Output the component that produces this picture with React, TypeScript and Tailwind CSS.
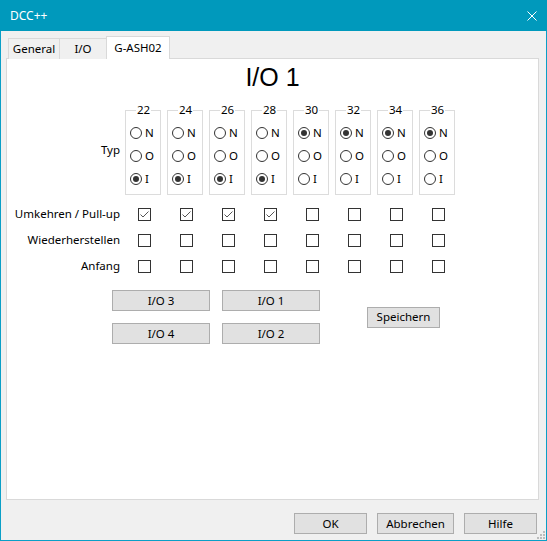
import React from "react";

const PINS = [22, 24, 26, 28, 30, 32, 34, 36];
// which radio is set per pin: "N" | "O" | "I"
const TYPE: Record<number, string> = {
  22: "I", 24: "I", 26: "I", 28: "I",
  30: "N", 32: "N", 34: "N", 36: "N",
};
const INVERT = [true, true, true, true, false, false, false, false];

function Radio({ on, label }: { on: boolean; label: string }) {
  return (
    <div className="flex h-[22px] items-center">
      <span className="flex h-[12px] w-[12px] items-center justify-center rounded-full border border-[#333333] bg-white">
        {on && <span className="h-[6px] w-[6px] rounded-full bg-[#333333]" />}
      </span>
      <span className="ml-[3px] leading-none">{label}</span>
    </div>
  );
}

function Check({ on }: { on: boolean }) {
  return (
    <span className="ml-[13px] flex h-[13px] w-[13px] items-center justify-center border border-[#333333] bg-white">
      {on && (
        <svg width="11" height="11" viewBox="0 0 11 11">
          <polyline
            points="1.5,5.5 4,8 9.5,2.5"
            fill="none"
            stroke="#555555"
            strokeWidth="1"
          />
        </svg>
      )}
    </span>
  );
}

function Btn({ w, children }: { w: string; children: React.ReactNode }) {
  return (
    <div
      className={`${w} flex h-[21px] items-center justify-center border border-[#adadad] bg-[#e1e1e1]`}
    >
      {children}
    </div>
  );
}

function CheckRow({ label, values }: { label: string; values: boolean[] }) {
  return (
    <div className="flex h-[26px] items-center">
      <div className="w-[113px] text-right">{label}</div>
      <div className="ml-[5px] flex gap-[6px]">
        {values.map((v, i) => (
          <div key={i} className="flex w-[36px] items-center">
            <Check on={v} />
          </div>
        ))}
      </div>
    </div>
  );
}

export default function App() {
  const none = PINS.map(() => false);

  return (
    <div
      className="relative flex h-[541px] w-[547px] flex-col border-x border-b border-[#0a9fc7] bg-[#f0f0f0] text-[11.5px] text-black"
      style={{ fontFamily: '"Noto Sans", "Open Sans", sans-serif' }}
    >
      {/* title bar */}
      <div className="-mx-px flex h-[31px] items-center justify-between bg-[#0099bc] pl-[10px] pr-[10px] text-[12px] text-white">
        <span>DCC++</span>
        <svg width="10" height="10" viewBox="0 0 10 10">
          <path d="M0.5 0.5 L9.5 9.5 M9.5 0.5 L0.5 9.5" stroke="#ffffff" strokeWidth="1" />
        </svg>
      </div>

      {/* tabs */}
      <div className="ml-[5px] mt-[5px] flex w-[533px] flex-col">
        <div className="relative z-10 -mb-px flex h-[23px] items-end pl-[2px]">
          <div className="flex h-[21px] w-[52px] items-center justify-center border border-b-0 border-[#d9d9d9] bg-[#f0f0f0]">
            General
          </div>
          <div className="flex h-[21px] w-[47px] items-center justify-center border border-b-0 border-l-0 border-[#d9d9d9] bg-[#f0f0f0]">
            I/O
          </div>
          <div className="-ml-px flex h-[23px] w-[64px] items-center justify-center border border-b-0 border-[#d9d9d9] bg-white pb-[1px]">
            G-ASH02
          </div>
        </div>

        {/* panel */}
        <div className="flex h-[442px] flex-col border border-[#d9d9d9] bg-white">
          <div
            className="mt-[3px] text-center text-[25px] leading-[30px]"
            style={{ fontFamily: '"Liberation Sans", Arial, sans-serif' }}
          >
            I/O 1
          </div>

          {/* Typ group row */}
          <div className="mt-[10px] flex items-center">
            <div className="w-[113px] pt-[3px] text-right">Typ</div>
            <div className="ml-[5px] flex gap-[6px]">
              {PINS.map((p) => (
                <fieldset
                  key={p}
                  className="w-[36px] border border-[#dcdcdc] pb-[4px] pl-[4px]"
                >
                  <legend className="ml-[6px] px-[1px] leading-[16px]">{p}</legend>
                  <div className="flex flex-col gap-[1px] pt-[4px]">
                    {["N", "O", "I"].map((t) => (
                      <Radio key={t} label={t} on={TYPE[p] === t} />
                    ))}
                  </div>
                </fieldset>
              ))}
            </div>
          </div>

          <div className="mt-[6px] flex flex-col">
            <CheckRow label="Umkehren / Pull-up" values={INVERT} />
            <CheckRow label="Wiederherstellen" values={none} />
            <CheckRow label="Anfang" values={none} />
          </div>

          {/* page buttons */}
          <div className="ml-[105px] mt-[11px] flex items-center">
            <div className="grid grid-cols-2 gap-x-[12px] gap-y-[12px]">
              <Btn w="w-[98px]">I/O 3</Btn>
              <Btn w="w-[98px]">I/O 1</Btn>
              <Btn w="w-[98px]">I/O 4</Btn>
              <Btn w="w-[98px]">I/O 2</Btn>
            </div>
            <div className="ml-[47px]">
              <Btn w="w-[73px]">Speichern</Btn>
            </div>
          </div>
        </div>
      </div>

      {/* footer */}
      <div className="mt-[13px] flex justify-end gap-[10px] pr-[9px]">
        <Btn w="w-[73px]">OK</Btn>
        <Btn w="w-[77px]">Abbrechen</Btn>
        <Btn w="w-[73px]">Hilfe</Btn>
      </div>

      {/* size grip */}
      <svg
        className="absolute bottom-0 right-0"
        width="11"
        height="11"
        viewBox="0 0 11 11"
      >
        <g fill="#bcbcbc">
          <rect x="8" y="2" width="2" height="2" />
          <rect x="5" y="5" width="2" height="2" />
          <rect x="8" y="5" width="2" height="2" />
          <rect x="2" y="8" width="2" height="2" />
          <rect x="5" y="8" width="2" height="2" />
          <rect x="8" y="8" width="2" height="2" />
        </g>
      </svg>
    </div>
  );
}
